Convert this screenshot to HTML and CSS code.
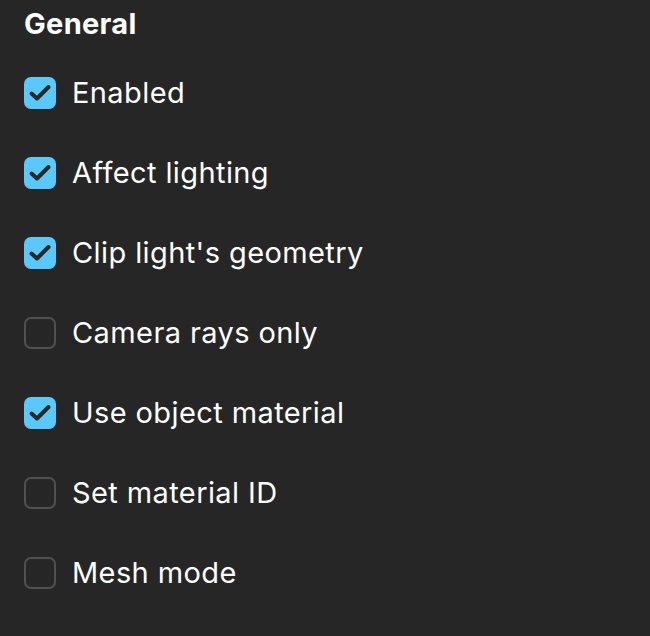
FILE: index.html
```html
<!DOCTYPE html>
<html>
<head>
<meta charset="utf-8">
<link rel="stylesheet" href="styles.css">
</head>
<body>
<div class="panel">
  <h2 class="title">General</h2>
  <ul class="list">
    <li class="row"><span class="box on"><svg viewBox="0 0 32 32"><path d="M7.5 16.5l5.5 5 11.5-11.5"/></svg></span><span class="label">Enabled</span></li>
    <li class="row"><span class="box on"><svg viewBox="0 0 32 32"><path d="M7.5 16.5l5.5 5 11.5-11.5"/></svg></span><span class="label">Affect lighting</span></li>
    <li class="row"><span class="box on"><svg viewBox="0 0 32 32"><path d="M7.5 16.5l5.5 5 11.5-11.5"/></svg></span><span class="label">Clip light's geometry</span></li>
    <li class="row"><span class="box"></span><span class="label">Camera rays only</span></li>
    <li class="row"><span class="box on"><svg viewBox="0 0 32 32"><path d="M7.5 16.5l5.5 5 11.5-11.5"/></svg></span><span class="label">Use object material</span></li>
    <li class="row"><span class="box"></span><span class="label">Set material ID</span></li>
    <li class="row"><span class="box"></span><span class="label">Mesh mode</span></li>
  </ul>
</div>
</body>
</html>
```
FILE: styles.css
```css
html, body {
  margin: 0;
  padding: 0;
  background: #262626;
  height: 100%;
}
body {
  font-family: Inter, "Noto Sans", sans-serif;
  color: #ffffff;
}
.panel {
  padding: 4px 24px 0 24px;
}
.title {
  margin: 0;
  font-size: 29px;
  font-weight: 700;
  letter-spacing: 0.3px;
  line-height: 40px;
}
.list {
  list-style: none;
  margin: 0;
  padding: 0;
  display: flex;
  flex-direction: column;
  gap: 32px;
  margin-top: 25px;
}
.row {
  display: flex;
  align-items: center;
  gap: 16px;
  height: 48px;
}
.box {
  width: 32px;
  height: 32px;
  box-sizing: border-box;
  border-radius: 7px;
  border: 2px solid #505050;
  flex: none;
  display: flex;
}
.box.on {
  background: #5ac8fa;
  border-color: #5ac8fa;
}
.box svg {
  width: 32px;
  height: 32px;
  margin: -2px;
  fill: none;
  stroke: #262626;
  stroke-width: 4;
  stroke-linecap: round;
  stroke-linejoin: round;
}
.label {
  font-size: 29px;
  letter-spacing: 0.4px;
  line-height: 34px;
}
```
